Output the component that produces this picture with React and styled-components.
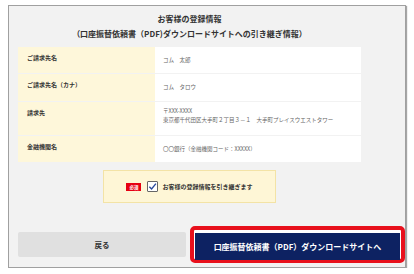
import styled, { createGlobalStyle } from 'styled-components';

const GlobalStyle = createGlobalStyle`
  html, body {
    margin: 0;
    padding: 0;
    background: #fff;
    font-family: "Noto Sans CJK JP", "Noto Sans", sans-serif;
  }
`;

const Panel = styled.div`
  box-sizing: border-box;
  margin: 5px 0 0 8px;
  width: 398px;
  height: 263px;
  background: #f2f2f2;
  border: 1px solid #a0a0a0;
  box-shadow: 1px 1px 1px rgba(0, 0, 0, 0.35);
  padding: 5px 0 0 9px;
  display: flex;
  flex-direction: column;
`;

const Content = styled.div`
  width: 343px;
  display: flex;
  flex-direction: column;
  align-items: center;
`;

const Title = styled.h1`
  margin: 0;
  font-size: 8px;
  line-height: 15px;
  font-weight: bold;
  color: #333;
  text-align: center;
`;

const Table = styled.div`
  margin-top: 6px;
  width: 100%;
  display: flex;
  flex-direction: column;
  gap: 1px;
`;

const Row = styled.div`
  display: grid;
  grid-template-columns: 137px 1fr;
  height: ${(p) => p.h}px;
`;

const Label = styled.div`
  background: #fef7da;
  padding: 6px 0 0 9px;
  font-size: 6px;
  line-height: 9px;
  font-weight: bold;
  color: #333;
`;

const Value = styled.div`
  background: #fff;
  padding: 9px 0 0 8px;
  font-size: 5.5px;
  line-height: 9px;
  color: #666;
`;

const ConsentBox = styled.div`
  box-sizing: border-box;
  margin-top: 8px;
  width: 173px;
  height: 33px;
  background: #fef6d6;
  border: 1px solid #f3e3a6;
  display: flex;
  align-items: center;
  justify-content: center;
`;

const Badge = styled.span`
  width: 15px;
  height: 8px;
  background: #e60012;
  color: #fff;
  font-size: 4.5px;
  font-weight: bold;
  display: flex;
  align-items: center;
  justify-content: center;
`;

const CheckBox = styled.span`
  box-sizing: border-box;
  margin-left: 6px;
  width: 11px;
  height: 11px;
  border: 1px solid #666;
  border-radius: 1px;
  background: #fff;
  display: flex;
  align-items: center;
  justify-content: center;
`;

const ConsentText = styled.span`
  margin-left: 4px;
  font-size: 6px;
  font-weight: bold;
  color: #333;
`;

const ButtonRow = styled.div`
  margin-top: 23px;
  display: flex;
  align-items: center;
  gap: 4px;
`;

const BackButton = styled.button`
  width: 168px;
  height: 25px;
  border: none;
  border-radius: 2px;
  background: #e0e0e0;
  color: #333;
  font-family: inherit;
  font-size: 7.5px;
  font-weight: bold;
  padding: 0;
`;

const Highlight = styled.div`
  box-sizing: border-box;
  width: 215px;
  height: 37px;
  border: 4px solid #e8101c;
  border-radius: 5px;
  padding: 1px;
  background: #fff;
`;

const NextButton = styled.button`
  width: 100%;
  height: 100%;
  border: none;
  background: #0d2262;
  color: #fff;
  font-family: inherit;
  font-size: 8px;
  font-weight: bold;
  padding: 0;
`;

const rows = [
  { label: 'ご請求先名', value: ['コム　太郎'], h: 26 },
  { label: 'ご請求先名（カナ）', value: ['コム　タロウ'], h: 27 },
  { label: '請求先', value: ['〒XXX-XXXX', '東京都千代田区大手町２丁目３－１　大手町プレイスウエストタワー'], h: 33 },
  { label: '金融機関名', value: ['〇〇銀行（金融機関コード：XXXXX）'], h: 26 },
];

export default function App() {
  return (
    <>
      <GlobalStyle />
      <Panel>
        <Content>
          <Title>
            お客様の登録情報
            <br />
            （口座振替依頼書（PDF)ダウンロードサイトへの引き継ぎ情報）
          </Title>
          <Table>
            {rows.map((r) => (
              <Row key={r.label} h={r.h}>
                <Label>{r.label}</Label>
                <Value style={r.value.length > 1 ? { paddingTop: 5 } : undefined}>
                  {r.value.map((v) => (
                    <div key={v}>{v}</div>
                  ))}
                </Value>
              </Row>
            ))}
          </Table>
          <ConsentBox>
            <Badge>必須</Badge>
            <CheckBox>
              <svg width="9" height="9" viewBox="0 0 10 10">
                <path d="M1.5 5.2 L4 7.8 L8.8 1.8" fill="none" stroke="#2a4a9c" strokeWidth="1.5" />
              </svg>
            </CheckBox>
            <ConsentText>お客様の登録情報を引き継ぎます</ConsentText>
          </ConsentBox>
        </Content>
        <ButtonRow>
          <BackButton>戻る</BackButton>
          <Highlight>
            <NextButton>口座振替依頼書（PDF）ダウンロードサイトへ</NextButton>
          </Highlight>
        </ButtonRow>
      </Panel>
    </>
  );
}
